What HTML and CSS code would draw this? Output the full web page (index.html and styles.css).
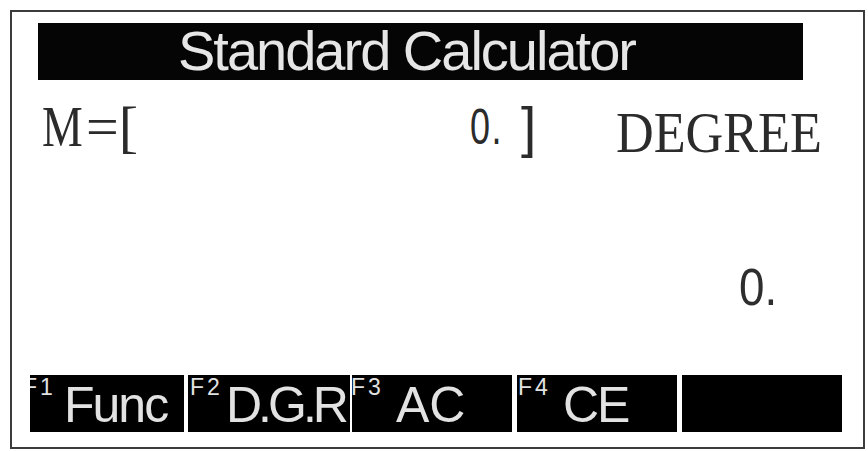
FILE: index.html
```html
<!DOCTYPE html>
<html>
<head>
<meta charset="utf-8">
<title>Standard Calculator</title>
<link rel="stylesheet" href="styles.css">
</head>
<body>
<div class="frame">
  <div class="title">Standard Calculator</div>
  <div class="row-mem">
    <div class="mem-label"><span class="glyph-m">M</span><span>=[</span></div>
    <div class="mem-value"><span class="digits">0.</span></div>
    <div class="mem-close">]</div>
    <div class="mode"><span class="mode-text">DEGREE</span></div>
  </div>
  <div class="row-result"><span class="result">0.</span></div>
  <div class="fbar">
    <div class="fkey k1"><span class="fn">F1</span><span class="fl">Func</span></div>
    <div class="fkey k2"><span class="fn">F2</span><span class="fl">D.G.R</span></div>
    <div class="fkey k3"><span class="fn">F3</span><span class="fl">AC</span></div>
    <div class="fkey k4"><span class="fn">F4</span><span class="fl">CE</span></div>
    <div class="fkey k5"></div>
  </div>
</div>
</body>
</html>
```

FILE: styles.css
```css
* { box-sizing: border-box; }

body {
  margin: 0;
  background: #ffffff;
  font-family: "Liberation Sans", Arial, sans-serif;
}

.frame {
  width: 855px;
  height: 439px;
  margin: 10px 0 0 10px;
  border: 2px solid #3c3c3c;
  display: flex;
  flex-direction: column;
  background: #ffffff;
}

.title {
  flex-shrink: 0;
  margin: 11px 0 0 26px;
  width: 765px;
  height: 57px;
  background: #050505;
  color: #e6e6e6;
  font-size: 56px;
  line-height: 55px;
  letter-spacing: -2px;
  padding-left: 140px;
  white-space: nowrap;
}

.row-mem {
  flex-shrink: 0;
  display: flex;
  align-items: flex-start;
  height: 100px;
  padding-top: 18px;
  padding-left: 30px;
  color: #2b2b2b;
}

.mem-label {
  flex-shrink: 0;
  width: 100px;
  display: flex;
  font-family: "Liberation Serif", "Times New Roman", serif;
  font-size: 58px;
  line-height: 58px;
  white-space: nowrap;
}

.glyph-m {
  display: inline-block;
  width: 44px;
  transform: scaleX(0.79);
  transform-origin: left;
}

.mem-value {
  flex-shrink: 0;
  margin-left: 328px;
  width: 51px;
  font-size: 50px;
  line-height: 58px;
  white-space: nowrap;
}

.digits {
  display: inline-block;
  transform: scaleX(0.72);
  transform-origin: left;
  letter-spacing: 2px;
}

.mem-close {
  flex-shrink: 0;
  width: 95px;
  font-size: 55px;
  line-height: 58px;
}

.mode {
  flex-shrink: 0;
  margin-top: 6px;
  font-family: "Liberation Serif", "Times New Roman", serif;
  font-size: 58px;
  line-height: 58px;
  white-space: nowrap;
}

.mode-text {
  display: inline-block;
  transform: scaleX(0.9);
  transform-origin: left;
}

.row-result {
  flex-shrink: 0;
  padding-top: 78px;
  padding-left: 727px;
  font-size: 52px;
  line-height: 58px;
  color: #2e2e2e;
  white-space: nowrap;
}

.result {
  display: inline-block;
  transform: scaleX(0.88);
  transform-origin: left;
}

.fbar {
  flex-shrink: 0;
  margin-top: auto;
  margin-bottom: 15px;
  height: 57px;
  display: flex;
  padding-left: 18px;
}

.fkey {
  flex-shrink: 0;
  height: 57px;
  background: #000000;
  color: #e2e2e2;
  display: flex;
  align-items: flex-start;
  overflow: hidden;
  white-space: nowrap;
}

.fn {
  flex-shrink: 0;
  margin-top: 1px;
  font-size: 23px;
  line-height: 22px;
  letter-spacing: 3px;
}

.fl {
  margin-top: 3px;
  font-size: 50px;
  line-height: 54px;
  letter-spacing: -2px;
}

.k1 { width: 154px; }
.k2 { width: 162px; margin-left: 4px; }
.k3 { width: 160px; margin-left: 2px; }
.k4 { width: 160px; margin-left: 5px; }
.k5 { width: 160px; margin-left: 5px; }

.k1 .fn { margin-left: -7px; width: 41px; }
.k2 .fn { margin-left: 2px; width: 36px; }
.k3 .fn { margin-left: -1px; width: 45px; }
.k4 .fn { margin-left: 1px; width: 45px; }

.k2 .fl { letter-spacing: -4px; }
.k3 .fl { letter-spacing: 0; }
```
